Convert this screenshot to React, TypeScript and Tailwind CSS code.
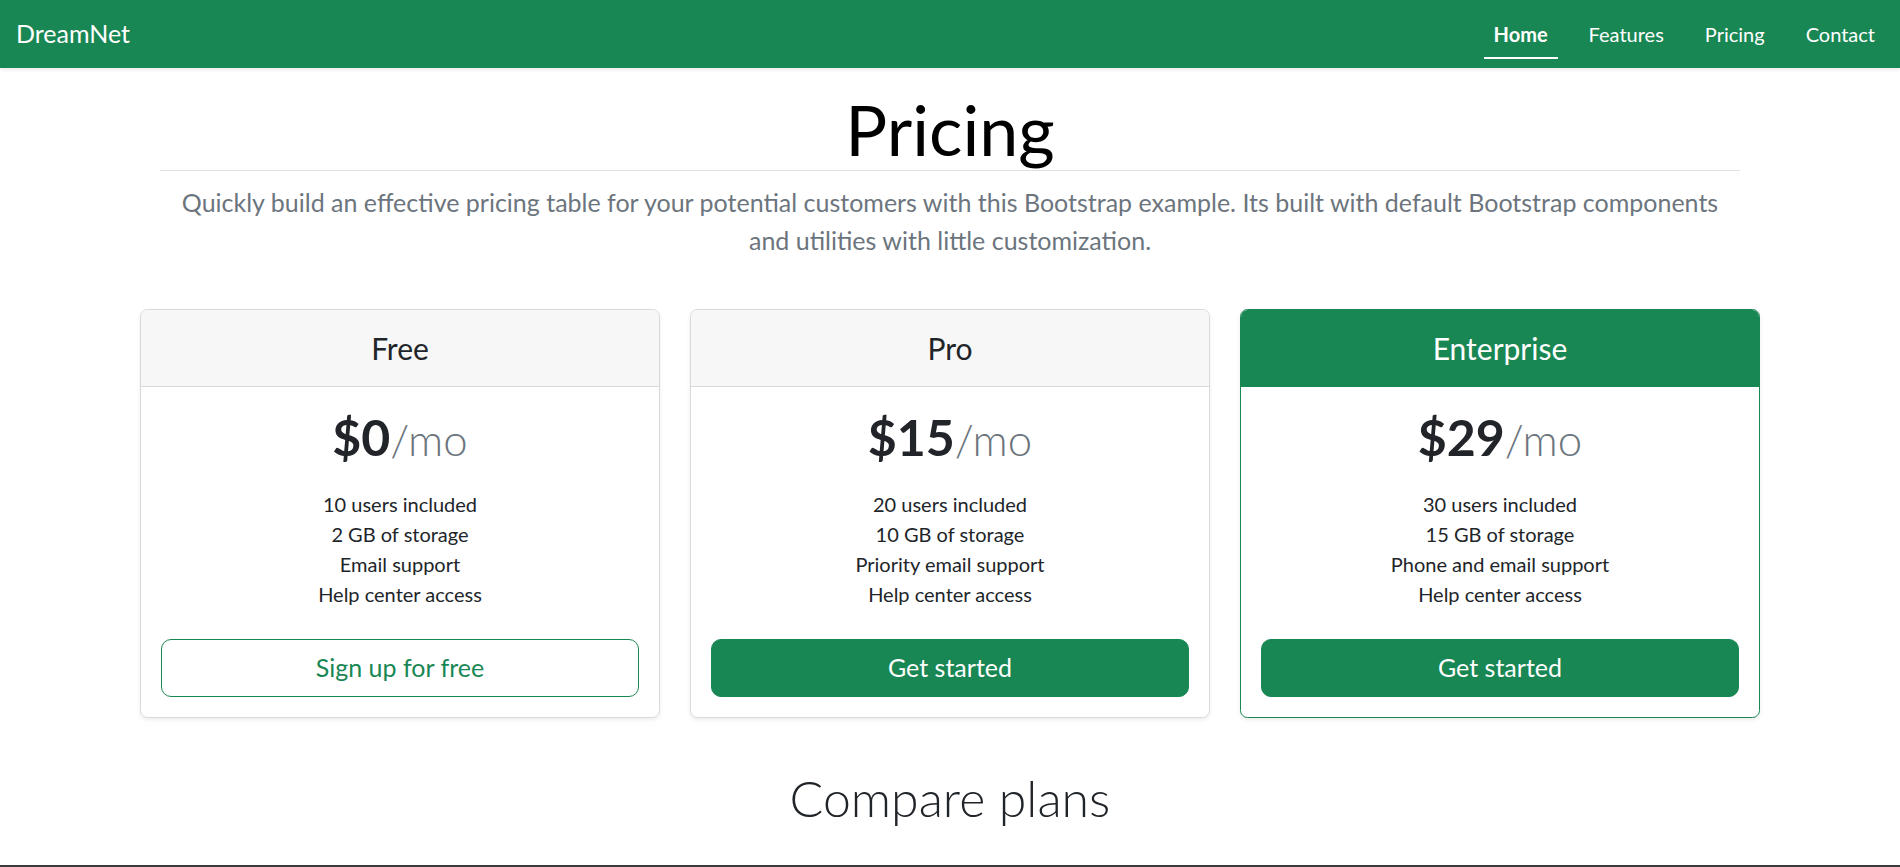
import React from "react";

type Plan = {
  name: string;
  price: string;
  features: string[];
  cta: string;
  variant: "outline" | "solid";
  highlight?: boolean;
};

const plans: Plan[] = [
  {
    name: "Free",
    price: "$0",
    features: ["10 users included", "2 GB of storage", "Email support", "Help center access"],
    cta: "Sign up for free",
    variant: "outline",
  },
  {
    name: "Pro",
    price: "$15",
    features: ["20 users included", "10 GB of storage", "Priority email support", "Help center access"],
    cta: "Get started",
    variant: "solid",
  },
  {
    name: "Enterprise",
    price: "$29",
    features: ["30 users included", "15 GB of storage", "Phone and email support", "Help center access"],
    cta: "Get started",
    variant: "solid",
    highlight: true,
  },
];

const links = ["Home", "Features", "Pricing", "Contact"];

function PricingCard({ plan }: { plan: Plan }) {
  return (
    <div
      className={
        plan.highlight
          ? "rounded-[7.5px] border border-[#198754] bg-white shadow-[0_2px_4px_rgba(0,0,0,0.075)] overflow-hidden"
          : "rounded-[7.5px] border border-[#d9d9d9] bg-white shadow-[0_2px_4px_rgba(0,0,0,0.075)] overflow-hidden"
      }
    >
      <div
        className={
          plan.highlight
            ? "py-[20px] text-[30px] leading-[36px] bg-[#198754] text-white border-b border-[#198754]"
            : "py-[20px] text-[30px] leading-[36px] bg-[#f7f7f7] text-[#212529] border-b border-[#d9d9d9]"
        }
      >
        {plan.name}
      </div>
      <div className="p-[20px]">
        <div className="text-[50px] leading-[60px] text-[#212529]">
          <span className="font-bold">{plan.price}</span>
          <span className="text-[43.75px] font-light text-[#6c757d]">/mo</span>
        </div>
        <ul className="mt-[20px] mb-[30px] text-[20px] leading-[30px] text-[#212529]">
          {plan.features.map((f) => (
            <li key={f}>{f}</li>
          ))}
        </ul>
        {plan.variant === "outline" ? (
          <button className="w-full h-[58px] rounded-[10px] border border-[#198754] text-[25px] text-[#198754] bg-white">
            {plan.cta}
          </button>
        ) : (
          <button className="w-full h-[58px] rounded-[10px] border border-[#198754] text-[25px] text-white bg-[#198754]">
            {plan.cta}
          </button>
        )}
      </div>
    </div>
  );
}

export default function App() {
  return (
    <div className="min-h-[867px] bg-white font-['Lato',sans-serif] text-[#212529] flex flex-col">
      <nav className="h-[68px] bg-[#198754] flex items-center justify-between pl-[16px] pr-[15px] shadow-[0_2px_4px_rgba(0,0,0,0.08)] relative z-10">
        <a className="text-[25px] text-white">DreamNet</a>
        <ul className="flex h-full items-center gap-[21px]">
          {links.map((l) => (
            <li key={l} className="relative h-full flex items-center px-[10px]">
              <a className={l === "Home" ? "text-[20px] text-white font-bold" : "text-[20px] text-white"}>{l}</a>
              {l === "Home" && (
                <span className="absolute left-0 right-0 bottom-[9px] h-[2.5px] bg-white" />
              )}
            </li>
          ))}
        </ul>
      </nav>

      <main className="mx-auto w-[1650px] px-[15px] flex-1">
        <div className="px-[20px] pt-[20px] pb-[30px] text-center">
          <h1 className="text-[70px] leading-[82px] text-black border-b border-[#dee2e6]">Pricing</h1>
          <p className="mt-[13px] mb-[20px] text-[25px] leading-[37.5px] text-[#6c757d]">
            Quickly build an effective pricing table for your potential customers with this Bootstrap example. Its built
            with default Bootstrap components
            <br />
            and utilities with little customization.
          </p>
        </div>

        <div className="grid grid-cols-3 gap-[30px] text-center">
          {plans.map((p) => (
            <PricingCard key={p.name} plan={p} />
          ))}
        </div>

        <h2 className="mt-[50px] text-center text-[50px] leading-[60px] font-light text-[#212529]">Compare plans</h2>
      </main>

      <div className="h-[2px] w-full bg-[#3b3b3b]" />
    </div>
  );
}
